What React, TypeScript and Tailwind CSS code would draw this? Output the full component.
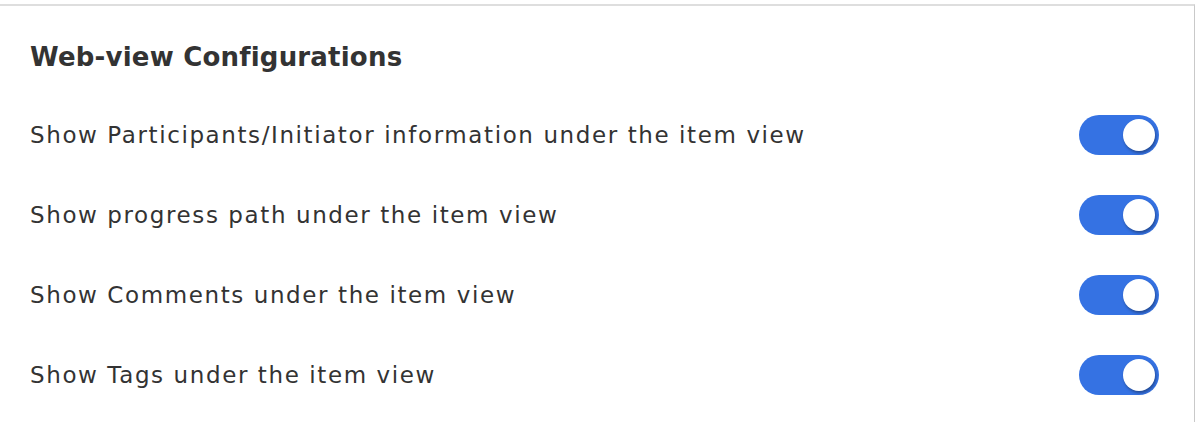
import React from 'react';

const rows = [
  'Show Participants/Initiator information under the item view',
  'Show progress path under the item view',
  'Show Comments under the item view',
  'Show Tags under the item view',
];

const Toggle = () => (
  <div className="flex h-10 w-20 items-center justify-end rounded-full bg-[#3572e3] px-1">
    <div className="h-8 w-8 rounded-full bg-white shadow-[1px_2px_3px_rgba(0,0,0,0.35)]" />
  </div>
);

export default function App() {
  return (
    <div className="h-[422px] w-[1196px] bg-white pt-1" style={{ fontFamily: '"DejaVu Sans", sans-serif' }}>
      <div className="h-full w-[1195px] border-t-2 border-r border-t-[#dedede] border-r-[#c9c9c9] pl-[30px] pr-[35px]">
        <h2 className="flex h-[89px] items-center pt-[14px] text-[26px] font-bold tracking-[0.2px] text-[#333333]">
          Web-view Configurations
        </h2>
        <div className="flex flex-col">
          {rows.map((r) => (
            <div key={r} className="flex h-20 items-center justify-between">
              <span className="text-[23px] tracking-[1.6px] text-[#333333]">{r}</span>
              <Toggle />
            </div>
          ))}
        </div>
      </div>
    </div>
  );
}
